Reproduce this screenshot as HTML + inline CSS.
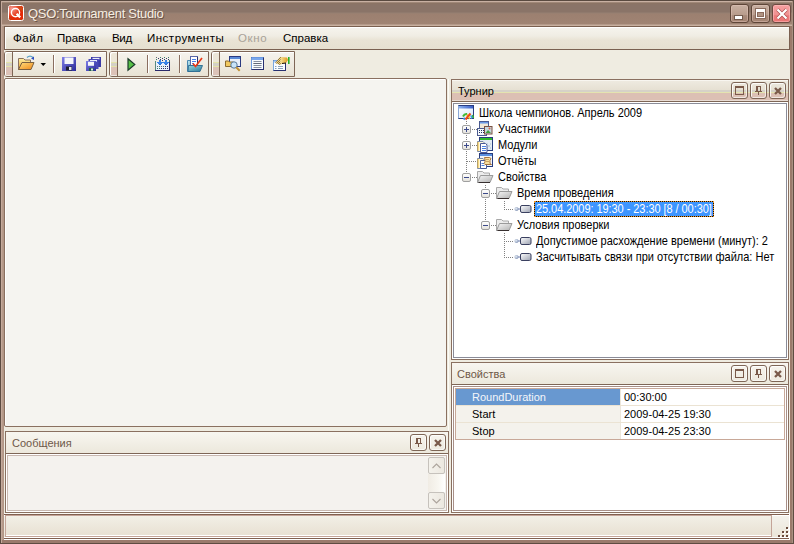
<!DOCTYPE html>
<html><head><meta charset="utf-8">
<style>
*{margin:0;padding:0;box-sizing:border-box}
html,body{width:794px;height:544px;overflow:hidden;background:#efece1;font-family:"Liberation Sans",sans-serif;font-size:11px;color:#000}
.a{position:absolute}
svg{position:absolute;overflow:visible}
.t{position:absolute;white-space:nowrap;line-height:13px;font-size:11px}
#frame{left:0;top:26px;width:794px;height:518px;background:linear-gradient(90deg,transparent 0,transparent 2px,#b89c8c 2px,#b09484 4px,transparent 4px,transparent 790px,#9c7a6a 790px,#9a7a6c 792px,transparent 792px)}
#fbot{left:0;top:540px;width:794px;height:4px;background:linear-gradient(#9a7a6c,#9a7a6c 3px,#5e4c42 3px)}
#title{left:0;top:0;width:794px;height:26px;background:linear-gradient(#5a4a40 0,#5a4a40 1px,#c8b0a2 1px,#c8b0a2 2px,#a08878 2px,#a08878 3px,#8c7464 3px,#8a7468 5px,#8a7468 12px,#968072 13px,#9c8070 14px,#a08474 24px,#c8b0a0 25px,#c8b0a0 26px)}
#client{left:4px;top:26px;width:786px;height:514px;background:#efece1}
#menubar{left:4px;top:26px;width:786px;height:24px;border:1px solid #7a6050;background:linear-gradient(#f6f4ee 0,#f0ede4 40%,#e9e3d5 60%,#e6e0d0 100%);box-shadow:inset 1px 1px 0 #fff}
.tb{top:51px;height:26px;border:1px solid #7e6656;border-radius:3px 0 0 3px;background:linear-gradient(#f6f4ee,#e8e2d4);box-shadow:inset 1px 1px 0 #fff}
.grip{left:0;top:0;width:8px;height:24px;border-right:1px solid #7e6656;border-radius:2px 0 0 2px;background:linear-gradient(#ece6d8 0,#ece6d8 10px,#e4e4a8 10px,#e4e4a8 11px,#d4d0c6 11px,#d4d0c6 14px,#e4e4a8 14px,#e4e4a8 15px,#dcc2b8 15px,#dcc2b8 23px,#ece6e0 23px);box-shadow:inset 1px 1px 0 #fff}
.sep{width:2px;height:18px;top:55px;background:linear-gradient(90deg,#8a6e60 1px,#fff 1px)}
.hdr{border-bottom:1px solid #7e6656}
.act{background:linear-gradient(#f8f6f0 0,#f8f6f0 1px,#eeeae0 1px,#e6e0d2 10px,#d6d2c8 10px,#d6d2c8 12px,#e4e4b0 12px,#e4e4b0 13px,#dcc0b4 13px,#dcc0b4 20px,#e8dcd4 20px)}
.ina{background:linear-gradient(#f8f6f0,#ece8dc)}
.pb{border:1px solid #8a7060;box-shadow:inset 1px 1px 0 #fff}
.hbtn{width:17px;height:17px;border:1px solid #7e6656;border-radius:3px;box-shadow:inset 1px 1px 0 rgba(255,255,255,.8),inset -1px -1px 0 rgba(255,255,255,.6)}
.dv{position:absolute;width:1px;background:repeating-linear-gradient(#808080 0,#808080 1px,transparent 1px,transparent 2px)}
.dh{position:absolute;height:1px;background:repeating-linear-gradient(90deg,#808080 0,#808080 1px,transparent 1px,transparent 2px)}
.exp{position:absolute;width:9px;height:9px;border:1px solid #a0a0a0;border-radius:2px;background:linear-gradient(#fff,#e4e2dc)}
.exp:before{content:"";position:absolute;left:1px;top:3px;width:5px;height:1px;background:#3c4a8a}
.exp.p:after{content:"";position:absolute;left:3px;top:1px;width:1px;height:5px;background:#3c4a8a}
</style></head><body>
<div class="a" id="client"></div>
<div class="a" id="frame"></div>
<div class="a" id="fbot"></div>
<div class="a" id="title"></div>
<div class="a" style="left:0;top:0;width:1px;height:544px;background:#5e4c42"></div>
<div class="a" style="left:1px;top:1px;width:1px;height:542px;background:#c4aa9c"></div>
<div class="a" style="left:793px;top:0;width:1px;height:544px;background:#5e4c42"></div>
<div class="a" style="left:792px;top:1px;width:1px;height:542px;background:#a89080"></div>

<!-- app icon -->
<svg style="left:8px;top:5px" width="16" height="16" viewBox="0 0 16 16">
 <defs><radialGradient id="ap" cx="0.2" cy="0.2" r="0.6"><stop offset="0" stop-color="#f4a098"/><stop offset="1" stop-color="#f4a098" stop-opacity="0"/></radialGradient></defs>
 <rect x="0.5" y="0.5" width="15" height="15" rx="2" fill="#e42a08" stroke="#fff"/>
 <rect x="1" y="1" width="14" height="14" fill="url(#ap)"/>
 <path d="M9 1.2 h4 l1.8 1.8 v4 z" fill="#c85a20" opacity=".7"/>
 <path d="M1.2 11 l3 3.8 h-3 z M8 14.8 h6 l0.8 -1 z" fill="#b84a18" opacity=".6"/>
 <circle cx="7.5" cy="7.6" r="4.1" fill="none" stroke="#fff" stroke-width="1.4"/>
 <path d="M8.6 8.8 L12.2 12.4" stroke="#fff" stroke-width="2.2"/>
</svg>
<div class="t" style="left:28px;top:6px;font-size:13px;line-height:15px;letter-spacing:-0.3px;color:#f6eee2;text-shadow:1px 1px 0 rgba(70,50,40,.6)">QSO:Tournament Studio</div>

<!-- window buttons -->
<div class="a" style="left:730px;top:4px;width:19px;height:19px;border:1px solid #5e4638;border-radius:3px;background:linear-gradient(#c8b0a2,#b89c8c 60%,#a88a7a 62%,#a48472);box-shadow:inset 0 0 0 1px rgba(230,200,190,.45)"></div>
<div class="a" style="left:735px;top:16px;width:7px;height:3px;background:#fff;box-shadow:0 0 0 1px rgba(80,60,50,.6)"></div>
<div class="a" style="left:751px;top:4px;width:19px;height:19px;border:1px solid #5e4638;border-radius:3px;background:linear-gradient(#c8b0a2,#b89c8c 60%,#a88a7a 62%,#a48472);box-shadow:inset 0 0 0 1px rgba(230,200,190,.45)"></div>
<div class="a" style="left:755px;top:8px;width:11px;height:11px;background:#8a6a5c"></div>
<div class="a" style="left:756px;top:9px;width:9px;height:9px;border:1px solid #fff;border-top-width:3px;background:#a88c7c"></div>
<div class="a" style="left:757px;top:12px;width:7px;height:5px;border:1px solid #8a6a5c;background:#b09484"></div>
<div class="a" style="left:772px;top:4px;width:19px;height:19px;border:1px solid #6e4a40;border-radius:3px;background:linear-gradient(#f6a0a0,#f09090 60%,#ec7c7c 62%,#ea7272);box-shadow:inset 0 0 0 1px rgba(255,200,200,.5)"></div>
<svg style="left:776px;top:8px" width="12" height="12" viewBox="0 0 12 12"><path d="M1.5 1.5 L10.5 10.5 M10.5 1.5 L1.5 10.5" stroke="#b05050" stroke-width="3.6"/><path d="M1.5 1.5 L10.5 10.5 M10.5 1.5 L1.5 10.5" stroke="#fff" stroke-width="2.2"/></svg>

<div class="a" id="menubar"></div>
<div class="t" style="left:13px;top:32px;font-size:11.5px;letter-spacing:0.6px">Файл</div>
<div class="t" style="left:57px;top:32px;font-size:11.5px">Правка</div>
<div class="t" style="left:112px;top:32px;font-size:11.5px;letter-spacing:-0.3px">Вид</div>
<div class="t" style="left:147px;top:32px;font-size:11.5px;letter-spacing:0.5px">Инструменты</div>
<div class="t" style="left:238px;top:32px;font-size:11.5px;letter-spacing:0.6px;color:#a8a298">Окно</div>
<div class="t" style="left:283px;top:32px;font-size:11.5px">Справка</div>

<!-- toolbars -->
<div class="a tb" style="left:4px;width:103px"><div class="a grip"></div></div>
<div class="a tb" style="left:109px;width:100px"><div class="a grip"></div></div>
<div class="a tb" style="left:211px;width:84px"><div class="a grip"></div></div>
<div class="a sep" style="left:53px"></div>
<div class="a sep" style="left:147px"></div>
<div class="a sep" style="left:179px"></div>

<!-- open folder -->
<svg style="left:17px;top:55px" width="18" height="16" viewBox="0 0 18 16">
 <defs><linearGradient id="fy" x1="0" y1="0" x2="0" y2="1"><stop offset="0" stop-color="#fff0a0"/><stop offset="1" stop-color="#e8a030"/></linearGradient>
 <linearGradient id="fo" x1="0" y1="0" x2="1" y2="1"><stop offset="0" stop-color="#ffe080"/><stop offset="1" stop-color="#f08818"/></linearGradient></defs>
 <path d="M1.5 3.5 h5 l1.5 1.5 h5.5 v9.5 h-12 z" fill="url(#fy)" stroke="#8a7060"/>
 <path d="M5 7.5 h12 l-3 7 h-12.5 z" fill="url(#fo)" stroke="#7a6040"/>
 <path d="M10 2.5 q3 -3 6 0" fill="none" stroke="#5aa0c8" stroke-width="1.2"/>
 <path d="M14 3.5 l3 -2 v3.5 z" fill="#3050c0"/>
</svg>
<svg style="left:40px;top:62px" width="7" height="5" viewBox="0 0 7 5"><path d="M0.5 1 h5.5 l-2.75 3 z" fill="#000"/></svg>

<!-- save -->
<svg style="left:61px;top:56px" width="16" height="16" viewBox="0 0 16 16">
 <defs><linearGradient id="fb" x1="0" y1="0" x2="1" y2="1"><stop offset="0" stop-color="#8080e8"/><stop offset="1" stop-color="#2a2a98"/></linearGradient></defs>
 <rect x="1" y="1" width="14" height="14" fill="url(#fb)"/>
 <rect x="3.5" y="1.5" width="9" height="6.5" fill="#f4f6fa"/>
 <rect x="5" y="10.5" width="6" height="4" fill="#202030"/>
 <rect x="8" y="11" width="2.5" height="3" fill="#e0e4f0"/>
</svg>
<!-- save all -->
<svg style="left:85px;top:56px" width="17" height="16" viewBox="0 0 17 16">
 <rect x="6" y="1" width="10" height="10" fill="#3a3aa8"/>
 <rect x="7.5" y="1.8" width="7" height="1.6" fill="#e8ecf8"/>
 <rect x="3.5" y="3" width="10" height="10" fill="#4848b8"/>
 <rect x="5" y="4" width="7" height="1.6" fill="#e8ecf8"/>
 <rect x="1" y="5" width="10" height="10" fill="url(#fb)"/>
 <rect x="3" y="5.8" width="6" height="4" fill="#f4f6fa"/>
 <rect x="4" y="12" width="4.5" height="3" fill="#206048"/>
 <rect x="6" y="12.5" width="2" height="2" fill="#e0e4f0"/>
</svg>

<!-- play -->
<svg style="left:127px;top:58px" width="9" height="13" viewBox="0 0 9 13">
 <path d="M1 0.8 L7.8 6.5 L1 12.2 z" fill="#58c048" stroke="#1a3a2a" stroke-width="1.2"/>
</svg>
<!-- import -->
<svg style="left:155px;top:56px" width="16" height="16" shape-rendering="crispEdges"><rect x="1" y="6" width="13" height="8" fill="#eaf2fc"/><rect x="1" y="1" width="1" height="1" fill="#606a70"/><rect x="5" y="1" width="1" height="1" fill="#3a7a70"/><rect x="9" y="1" width="1" height="1" fill="#3a7a70"/><rect x="13" y="1" width="1" height="1" fill="#3a7a70"/><rect x="3" y="2" width="1" height="1" fill="#30386a"/><rect x="7" y="2" width="1" height="1" fill="#30386a"/><rect x="11" y="2" width="1" height="1" fill="#30386a"/><rect x="1" y="3" width="1" height="1" fill="#3a7a70"/><rect x="5" y="3" width="1" height="1" fill="#30386a"/><rect x="9" y="3" width="1" height="1" fill="#30386a"/><rect x="13" y="3" width="1" height="1" fill="#30386a"/><rect x="7" y="4" width="1" height="1" fill="#30386a"/><rect x="0" y="5" width="1" height="9" fill="#5a8a80"/><rect x="14" y="5" width="1" height="9" fill="#2a2a6a"/><rect x="0" y="14" width="15" height="1" fill="#2a2a6a"/><rect x="14" y="4" width="1" height="2" fill="#3a7a70"/><rect x="4" y="4" width="2" height="3" fill="#3a86e8"/><rect x="2" y="6" width="6" height="1" fill="#3a86e8"/><rect x="3" y="7" width="4" height="1" fill="#3a86e8"/><rect x="4" y="8" width="2" height="1" fill="#2a70d0"/><rect x="10" y="4" width="2" height="3" fill="#3a86e8"/><rect x="8" y="6" width="6" height="1" fill="#3a86e8"/><rect x="9" y="7" width="4" height="1" fill="#3a86e8"/><rect x="10" y="8" width="2" height="1" fill="#2a70d0"/><rect x="2" y="10" width="1" height="1" fill="#607078"/><rect x="4" y="10" width="1" height="1" fill="#3a7a70"/><rect x="6" y="10" width="1" height="1" fill="#606070"/><rect x="8" y="10" width="1" height="1" fill="#3a7a70"/><rect x="10" y="10" width="1" height="1" fill="#30386a"/><rect x="12" y="10" width="1" height="1" fill="#30386a"/><rect x="2" y="12" width="1" height="1" fill="#3a7a70"/><rect x="4" y="12" width="1" height="1" fill="#3a7a70"/><rect x="6" y="12" width="1" height="1" fill="#30386a"/><rect x="8" y="12" width="1" height="1" fill="#30386a"/><rect x="10" y="12" width="1" height="1" fill="#30386a"/><rect x="12" y="12" width="1" height="1" fill="#30386a"/></svg>
<!-- open w/ check -->
<svg style="left:186px;top:55px" width="18" height="18" viewBox="0 0 18 18">
 <defs><linearGradient id="tl" x1="0" y1="0" x2="1" y2="1"><stop offset="0" stop-color="#c8ecf4"/><stop offset="1" stop-color="#3a90b0"/></linearGradient>
 <linearGradient id="tl2" x1="0" y1="0" x2="1" y2="1"><stop offset="0" stop-color="#9ad8e0"/><stop offset="1" stop-color="#2a7898"/></linearGradient></defs>
 <path d="M1.5 5.5 h3 l1 1 h2 v10 h-6 z" fill="url(#tl)" stroke="#4a88b0"/>
 <rect x="4.5" y="1.5" width="7" height="9" fill="#fff" stroke="#5a68a8"/>
 <path d="M11.5 2 v8.5" stroke="#283070"/>
 <path d="M6 4.5 h4 M6 6.5 h4 M6 8.5 h2" stroke="#4a80e8"/>
 <path d="M2.5 10.5 h14 l-2.5 6 h-12 z" fill="url(#tl2)" stroke="#2a6a90" stroke-width="0.9"/>
 <path d="M7 8.5 l2.5 3 l6.5 -8.5" fill="none" stroke="#e83818" stroke-width="1.7"/>
</svg>
<!-- find -->
<svg style="left:225px;top:55px" width="17" height="17" viewBox="0 0 17 17">
 <rect x="4.5" y="1.5" width="11" height="10" fill="#e8f0fa" stroke="#2a3a80"/>
 <rect x="5" y="2" width="10" height="2" fill="#5a8ad8"/>
 <path d="M0.5 6 h3 l1 1 h4 v4.5 h-8 z" fill="#f0c860" stroke="#8a6a30"/>
 <circle cx="9" cy="10" r="3.2" fill="#c8e4f8" stroke="#5a7a98"/>
 <path d="M11.2 12.2 l3.5 3.5" stroke="#c09030" stroke-width="2"/>
</svg>
<!-- doc window -->
<svg style="left:250px;top:56px" width="15" height="15" viewBox="0 0 15 15">
 <rect x="1.5" y="1.5" width="12" height="12" fill="#f8fbff" stroke="#283070"/>
 <path d="M1.5 13.5 v-12 h12" fill="none" stroke="#6a98e0"/>
 <rect x="2" y="2" width="11" height="2" fill="#7aa8ec"/>
 <path d="M3.5 5.5 h8 M3.5 7.5 h8 M3.5 9.5 h8 M3.5 11.5 h8" stroke="#8890a0"/>
 <path d="M3.5 7.5 h8" stroke="#606878"/>
</svg>
<!-- window + pen -->
<svg style="left:272px;top:55px" width="18" height="17" viewBox="0 0 18 17">
 <defs><pattern id="chk" width="2" height="2" patternUnits="userSpaceOnUse"><rect width="2" height="2" fill="#f4d878"/><rect width="1" height="1" fill="#8a7048"/><rect x="1" y="1" width="1" height="1" fill="#8a7048"/></pattern>
 <linearGradient id="hy" x1="0" y1="0" x2="1" y2="0"><stop offset="0" stop-color="#f8e8a0"/><stop offset="1" stop-color="#e09818"/></linearGradient></defs>
 <rect x="1.5" y="5.5" width="12" height="10" fill="#fbfdff" stroke="#283070"/>
 <path d="M1.5 15.5 v-10 h12" fill="none" stroke="#7aa8e0"/>
 <rect x="2" y="6" width="11" height="1.5" fill="#a8c8f0"/>
 <path d="M3 11.5 h1.5 M6 11.5 h5 M3 13.5 h1.5 M6 13.5 h5" stroke="#8aa0b8"/>
 <path d="M3 8 L8 2 L10 2 L11 8 L8 10 z" fill="url(#chk)"/>
 <path d="M9 2 L15 2.5 L16 5 L14 8 L10 9 L8 8 z" fill="url(#hy)"/>
 <path d="M10 8.5 l4 -0.5" stroke="#201810" stroke-width="1"/>
 <rect x="16" y="2" width="1.6" height="7" fill="#28b028"/>
</svg>
<!-- left big panel -->
<div class="a" style="left:4px;top:78px;width:443px;height:349px;border:1px solid #8a7060;border-radius:2px;background:#f5f4f0;box-shadow:inset 1px 1px 0 #fff"></div>
<div class="a" style="left:448px;top:79px;width:1px;height:433px;background:#fbfaf6"></div>

<!-- Турнир panel -->
<div class="a pb" style="left:451px;top:79px;width:338px;height:281px;background:#efece1"></div>
<div class="a hdr act" style="left:452px;top:80px;width:336px;height:22px"></div>
<div class="t" style="left:458px;top:85px">Турнир</div>
<div class="a hbtn" style="left:731px;top:82px"></div>
<div class="a hbtn" style="left:750px;top:82px"></div>
<div class="a hbtn" style="left:769px;top:82px"></div>
<svg style="left:735px;top:86px" width="9" height="9" shape-rendering="crispEdges"><path d="M0 0h9v2h-9z M0 2h1v7h-1z M8 2h1v7h-1z M0 8h9v1h-9z" fill="#7a5a4a"/></svg>
<svg style="left:755px;top:86px" width="7" height="9" shape-rendering="crispEdges"><path d="M1 0h5v1h-5z M1 1h2v4h-2z M5 1h1v4h-1z M0 5h7v1h-7z M3 6h1v3h-1z" fill="#7a5a4a"/></svg>
<svg style="left:774px;top:87px" width="8" height="8" viewBox="0 0 8 8"><path d="M1 1L7 7M7 1L1 7" stroke="#7a5a4a" stroke-width="2.3"/></svg>

<div class="a" style="left:452px;top:102px;width:336px;height:257px;background:#fff"></div>
<div class="a" style="left:453px;top:103px;width:334px;height:255px;border:1px solid #8a8c98;background:#fff"></div>

<!-- tree -->
<svg style="left:458px;top:105px" width="17" height="16" viewBox="0 0 17 16">
 <defs><linearGradient id="rb" x1="0" y1="0" x2="1" y2="1"><stop offset="0" stop-color="#fff"/><stop offset="1" stop-color="#d8e8fa"/></linearGradient>
 <linearGradient id="rt" x1="0" y1="0" x2="1" y2="0"><stop offset="0" stop-color="#8ab0f0"/><stop offset="1" stop-color="#3a5ec8"/></linearGradient></defs>
 <rect x="0.5" y="0.5" width="15" height="13" fill="url(#rb)" stroke="#283c80"/>
 <path d="M0.5 13.5 v-13" stroke="#8aa8d8"/>
 <rect x="1" y="1" width="14" height="2.5" fill="url(#rt)"/>
 <path d="M5 11.5 q1.5 -3 4 -2.5" stroke="#40b838" stroke-width="2" fill="none"/>
 <path d="M5.5 13 l1.5 1.5" stroke="#3a88e0" stroke-width="2"/>
 <path d="M8 11 l2 -2.5 l1 4 z" fill="#f8c020"/>
 <path d="M7.5 14.5 l5 -6" stroke="#f04818" stroke-width="2"/>
 <path d="M11 11 l1.5 2.5 l-2 1 z" fill="#f8c828"/>
 <path d="M12.5 10.5 l1.5 1.5 M13 13.5 l2 -2" stroke="#3a9ae0" stroke-width="1.4"/>
 <path d="M14.5 10 l1 3" stroke="#38b030" stroke-width="1.5"/>
</svg>
<div class="t" style="left:479px;top:106px;font-size:11px;transform:scaleY(1.125);transform-origin:0 0">Школа чемпионов. Апрель 2009</div>

<div class="dv" style="left:466px;top:121px;height:52px"></div>
<div class="dh" style="left:472px;top:129px;width:5px"></div>
<div class="dh" style="left:472px;top:145px;width:5px"></div>
<div class="dh" style="left:467px;top:161px;width:10px"></div>
<div class="dh" style="left:472px;top:177px;width:5px"></div>
<div class="exp p" style="left:462px;top:125px"></div>
<div class="exp p" style="left:462px;top:141px"></div>
<div class="exp" style="left:462px;top:173px"></div>

<!-- Участники icon -->
<svg style="left:477px;top:121px" width="16" height="16" viewBox="0 0 16 16">
 <rect x="2.5" y="0.5" width="9" height="7" fill="#f0e8d8" stroke="#4a5a90"/>
 <rect x="3" y="1" width="8" height="1.5" fill="#6a9ae8"/>
 <rect x="0.5" y="7.5" width="9" height="7" fill="#f4f8fc" stroke="#4a5a90"/>
 <g fill="#203060"><rect x="2" y="9" width="1" height="1"/><rect x="4" y="9" width="1" height="1"/><rect x="6" y="9" width="1" height="1"/><rect x="2" y="11" width="1" height="1"/><rect x="4" y="11" width="1" height="1"/><rect x="6" y="11" width="1" height="1"/></g>
 <rect x="7.5" y="5.5" width="7.5" height="7.5" fill="#c8d8e0" stroke="#7a5040"/>
 <path d="M8.5 12 l2.5 -3 l3 3 z" fill="#40a040"/>
 <circle cx="12.5" cy="7.5" r="1" fill="#e06040"/>
</svg>
<div class="t" style="left:498px;top:122px;font-size:11px;transform:scaleY(1.125);transform-origin:0 0">Участники</div>
<!-- Модули icon -->
<svg style="left:477px;top:137px" width="16" height="16" viewBox="0 0 16 16">
 <rect x="2.5" y="0.5" width="13" height="13" fill="#e4ecf4" stroke="#283c7c"/>
 <rect x="3" y="1" width="12" height="2" fill="#2cb82c"/>
 <path d="M9 6h2v2h-2zM11 8h2v2h-2zM9 10h2v2h-2zM13 6h1v2h-1zM13 10h1v2h-1z" fill="#c8d4e0"/>
 <path d="M0.5 4.5 h5.5 l1.5 1.5 v8.5 h-7 z" fill="#fff8d8" stroke="#7888a8"/>
 <path d="M1 5 v9" stroke="#f0b830"/>
 <path d="M3.5 6.5 h5 l1.5 1.5 v7.5 h-6.5 z" fill="#fff" stroke="#4a5a98"/>
 <path d="M5 9.5 h4 M5 11.5 h4 M5 13.5 h4" stroke="#4a80e0"/>
</svg>
<div class="t" style="left:498px;top:138px;font-size:11px;transform:scaleY(1.125);transform-origin:0 0">Модули</div>
<!-- Отчёты icon -->
<svg style="left:477px;top:153px" width="16" height="16" viewBox="0 0 16 16">
 <rect x="2.5" y="0.5" width="13" height="13" fill="#f0f4fa" stroke="#283c7c"/>
 <rect x="3" y="1" width="12" height="2" fill="#5a90e0"/>
 <path d="M0.5 5.5 h5.5 l1.5 1.5 v8.5 h-7 z" fill="#fff8d8" stroke="#7888a8"/>
 <path d="M1 6 v9" stroke="#f0b830"/>
 <path d="M3.5 7.5 h5 l1 1 v7 h-6 z" fill="#fff" stroke="#4a5a98"/>
 <path d="M4.5 10.5 h3 M4.5 12.5 h3" stroke="#4a80e0"/>
 <path d="M7.5 4.5 h5 l1.5 1 l-1 2 v3 l1.5 1 h-6.5 l-1 -1 l1 -1.5 v-2.5 z" fill="#f8e0a0" stroke="#a06a30" stroke-width="0.9"/>
 <path d="M9 6.5 h3 M9 8.5 h3" stroke="#c09050" stroke-width="0.8"/>
</svg>
<div class="t" style="left:498px;top:154px;font-size:11px;transform:scaleY(1.125);transform-origin:0 0">Отчёты</div>
<!-- Свойства folder -->
<svg style="left:477px;top:169px" width="17" height="16" viewBox="0 0 17 16">
 <defs><linearGradient id="gf" x1="0" y1="0" x2="1" y2="1"><stop offset="0" stop-color="#f8f8f8"/><stop offset="1" stop-color="#b0b0b0"/></linearGradient></defs>
 <path d="M0.5 2.5 h5 l1.5 1.5 h5.5 v9.5 h-12 z" fill="#ececec" stroke="#a8a8a8"/>
 <path d="M3.5 6.5 h12.5 l-3 7 h-12.5 z" fill="url(#gf)" stroke="#9a9a9a"/>
 <path d="M1.5 13.5 h11.5" stroke="#383030"/>
</svg>
<div class="t" style="left:498px;top:170px;font-size:11px;transform:scaleY(1.125);transform-origin:0 0">Свойства</div>

<div class="dv" style="left:485px;top:185px;height:36px"></div>
<div class="dh" style="left:491px;top:193px;width:5px"></div>
<div class="dh" style="left:491px;top:225px;width:5px"></div>
<div class="exp" style="left:481px;top:189px"></div>
<div class="exp" style="left:481px;top:221px"></div>
<svg style="left:496px;top:185px" width="17" height="16" viewBox="0 0 17 16">
 <path d="M0.5 2.5 h5 l1.5 1.5 h5.5 v9.5 h-12 z" fill="#ececec" stroke="#a8a8a8"/>
 <path d="M3.5 6.5 h12.5 l-3 7 h-12.5 z" fill="url(#gf)" stroke="#9a9a9a"/>
 <path d="M1.5 13.5 h11.5" stroke="#383030"/>
</svg>
<div class="t" style="left:517px;top:186px;font-size:11px;transform:scaleY(1.125);transform-origin:0 0">Время проведения</div>
<svg style="left:496px;top:217px" width="17" height="16" viewBox="0 0 17 16">
 <path d="M0.5 2.5 h5 l1.5 1.5 h5.5 v9.5 h-12 z" fill="#ececec" stroke="#a8a8a8"/>
 <path d="M3.5 6.5 h12.5 l-3 7 h-12.5 z" fill="url(#gf)" stroke="#9a9a9a"/>
 <path d="M1.5 13.5 h11.5" stroke="#383030"/>
</svg>
<div class="t" style="left:517px;top:218px;font-size:11px;transform:scaleY(1.125);transform-origin:0 0">Условия проверки</div>

<div class="dv" style="left:504px;top:201px;height:9px"></div>
<div class="dh" style="left:506px;top:209px;width:8px"></div>
<div class="dv" style="left:504px;top:233px;height:25px"></div>
<div class="dh" style="left:506px;top:241px;width:8px"></div>
<div class="dh" style="left:506px;top:257px;width:8px"></div>
<!-- leaf icons -->
<svg style="left:515px;top:204px" width="17" height="10" viewBox="0 0 17 10">
 <defs><linearGradient id="gl" x1="0" y1="0" x2="1" y2="1"><stop offset="0" stop-color="#ffffff"/><stop offset="1" stop-color="#9aa0b0"/></linearGradient>
 <radialGradient id="gn" cx="0.4" cy="0.4" r="0.6"><stop offset="0" stop-color="#e8f0f8"/><stop offset="1" stop-color="#8898b8"/></radialGradient></defs>
 <circle cx="1.5" cy="5" r="2" fill="url(#gn)"/><path d="M3 5 h2.5" stroke="#7080b0"/>
 <rect x="5.5" y="1.5" width="10.5" height="7" rx="1.5" fill="url(#gl)" stroke="#3a4060"/>
</svg>
<svg style="left:515px;top:236px" width="17" height="10" viewBox="0 0 17 10">
 <circle cx="1.5" cy="5" r="2" fill="url(#gn)"/><path d="M3 5 h2.5" stroke="#7080b0"/>
 <rect x="5.5" y="1.5" width="10.5" height="7" rx="1.5" fill="url(#gl)" stroke="#3a4060"/>
</svg>
<svg style="left:515px;top:252px" width="17" height="10" viewBox="0 0 17 10">
 <circle cx="1.5" cy="5" r="2" fill="url(#gn)"/><path d="M3 5 h2.5" stroke="#7080b0"/>
 <rect x="5.5" y="1.5" width="10.5" height="7" rx="1.5" fill="url(#gl)" stroke="#3a4060"/>
</svg>
<div class="a" style="left:534px;top:201px;width:180px;height:16px;background:#3d95ff;border:1px solid #141008"></div>
<div class="a" style="left:534px;top:201px;width:180px;height:16px;border:1px dotted #f09828"></div>
<div class="t" style="left:536px;top:202px;color:#fff;font-size:11px;letter-spacing:-0.06px;transform:scaleY(1.125);transform-origin:0 0">25.04.2009: 19:30 - 23:30 [8 / 00:30]</div>
<div class="t" style="left:536px;top:234px;font-size:11px;transform:scaleY(1.125);transform-origin:0 0">Допустимое расхождение времени (минут): 2</div>
<div class="t" style="left:536px;top:250px;font-size:11px;transform:scaleY(1.125);transform-origin:0 0">Засчитывать связи при отсутствии файла: Нет</div>

<!-- Свойства panel -->
<div class="a pb" style="left:451px;top:362px;width:338px;height:151px;background:#efece1"></div>
<div class="a hdr ina" style="left:452px;top:363px;width:336px;height:22px"></div>
<div class="t" style="left:457px;top:368px;color:#6e5848">Свойства</div>
<div class="a hbtn" style="left:731px;top:365px"></div>
<div class="a hbtn" style="left:750px;top:365px"></div>
<div class="a hbtn" style="left:769px;top:365px"></div>
<svg style="left:735px;top:369px" width="9" height="9" shape-rendering="crispEdges"><path d="M0 0h9v2h-9z M0 2h1v7h-1z M8 2h1v7h-1z M0 8h9v1h-9z" fill="#7a5a4a"/></svg>
<svg style="left:755px;top:369px" width="7" height="9" shape-rendering="crispEdges"><path d="M1 0h5v1h-5z M1 1h2v4h-2z M5 1h1v4h-1z M0 5h7v1h-7z M3 6h1v3h-1z" fill="#7a5a4a"/></svg>
<svg style="left:774px;top:370px" width="8" height="8" viewBox="0 0 8 8"><path d="M1 1L7 7M7 1L1 7" stroke="#7a5a4a" stroke-width="2.3"/></svg>
<div class="a" style="left:452px;top:385px;width:336px;height:127px;background:#fff"></div>
<div class="a" style="left:453px;top:386px;width:334px;height:125px;border:1px solid #a89088;background:#fff"></div>
<div class="a" style="left:455px;top:388px;width:330px;height:52px;border:1px solid #c8a898;background:#f4f2ec"></div>
<div class="a" style="left:456px;top:389px;width:164px;height:16px;background:#6898d0"></div>
<div class="a" style="left:620px;top:389px;width:164px;height:50px;background:#fff;border-left:1px solid #ece6da"></div>
<div class="a" style="left:456px;top:405px;width:328px;height:1px;background:#ebe3d3"></div>
<div class="a" style="left:456px;top:422px;width:328px;height:1px;background:#ebe3d3"></div>
<div class="t" style="left:472px;top:391px;color:#f4f6fa">RoundDuration</div>
<div class="t" style="left:472px;top:408px">Start</div>
<div class="t" style="left:472px;top:425px">Stop</div>
<div class="t" style="left:624px;top:391px">00:30:00</div>
<div class="t" style="left:624px;top:408px">2009-04-25 19:30</div>
<div class="t" style="left:624px;top:425px">2009-04-25 23:30</div>

<!-- Сообщения panel -->
<div class="a pb" style="left:5px;top:431px;width:444px;height:82px;background:#efece1"></div>
<div class="a hdr ina" style="left:6px;top:432px;width:442px;height:22px"></div>
<div class="t" style="left:12px;top:437px;color:#6e5848">Сообщения</div>
<div class="a hbtn" style="left:410px;top:434px"></div>
<div class="a hbtn" style="left:429px;top:434px"></div>
<svg style="left:415px;top:438px" width="7" height="9" shape-rendering="crispEdges"><path d="M1 0h5v1h-5z M1 1h2v4h-2z M5 1h1v4h-1z M0 5h7v1h-7z M3 6h1v3h-1z" fill="#7a5a4a"/></svg>
<svg style="left:434px;top:439px" width="8" height="8" viewBox="0 0 8 8"><path d="M1 1L7 7M7 1L1 7" stroke="#7a5a4a" stroke-width="2.3"/></svg>
<div class="a" style="left:6px;top:454px;width:442px;height:58px;background:#fff"></div>
<div class="a" style="left:7px;top:455px;width:440px;height:56px;border:1px solid #c8b8b0;background:#f4f2ee"></div>
<!-- scrollbar -->
<div class="a" style="left:428px;top:474px;width:17px;height:18px;background:linear-gradient(90deg,#f0ece4,#f8f6f0 60%,#fff)"></div>
<div class="a" style="left:428px;top:457px;width:17px;height:17px;border:1px solid #c6c2bc;border-radius:2px;background:linear-gradient(90deg,#f4f2ec,#ece8e0)"></div>
<div class="a" style="left:428px;top:492px;width:17px;height:17px;border:1px solid #c6c2bc;border-radius:2px;background:linear-gradient(90deg,#f4f2ec,#ece8e0)"></div>
<svg style="left:431px;top:462px" width="11" height="8" viewBox="0 0 11 8"><path d="M1.5 6 L5.5 2 L9.5 6" fill="none" stroke="#aca49c" stroke-width="1.1"/></svg>
<svg style="left:431px;top:497px" width="11" height="8" viewBox="0 0 11 8"><path d="M1.5 2 L5.5 6 L9.5 2" fill="none" stroke="#aca49c" stroke-width="1.1"/></svg>

<!-- status bar -->
<div class="a" style="left:4px;top:514px;width:786px;height:25px;border-top:1px solid #806050;border-bottom:1px solid #806050;background:linear-gradient(#f4f2ec,#ebe5d8);box-shadow:inset 0 1px 0 #fff, inset 0 -1px 0 #fff"></div>
<div class="a" style="left:5px;top:515px;width:767px;height:22px;border:1px solid #c4a498;background:linear-gradient(#f2efe6,#e8e0d2);box-shadow:inset 0 -1px 0 #fff"></div>
<div class="a" style="left:789px;top:514px;width:1px;height:26px;background:#fff"></div>
<div class="a" style="left:4px;top:513px;width:786px;height:1px;background:#fbf9f4"></div>
<div class="a" style="left:4px;top:539px;width:786px;height:1px;background:#fff"></div>
<svg style="left:777px;top:526px" width="12" height="12" viewBox="0 0 12 12">
 <g fill="#fff"><rect x="10" y="2" width="2" height="2"/><rect x="6" y="6" width="2" height="2"/><rect x="10" y="6" width="2" height="2"/><rect x="2" y="10" width="2" height="2"/><rect x="6" y="10" width="2" height="2"/><rect x="10" y="10" width="2" height="2"/></g>
 <g fill="#6a4a3c"><rect x="9" y="1" width="2" height="2"/><rect x="5" y="5" width="2" height="2"/><rect x="9" y="5" width="2" height="2"/><rect x="1" y="9" width="2" height="2"/><rect x="5" y="9" width="2" height="2"/><rect x="9" y="9" width="2" height="2"/></g>
</svg>
</body></html>
